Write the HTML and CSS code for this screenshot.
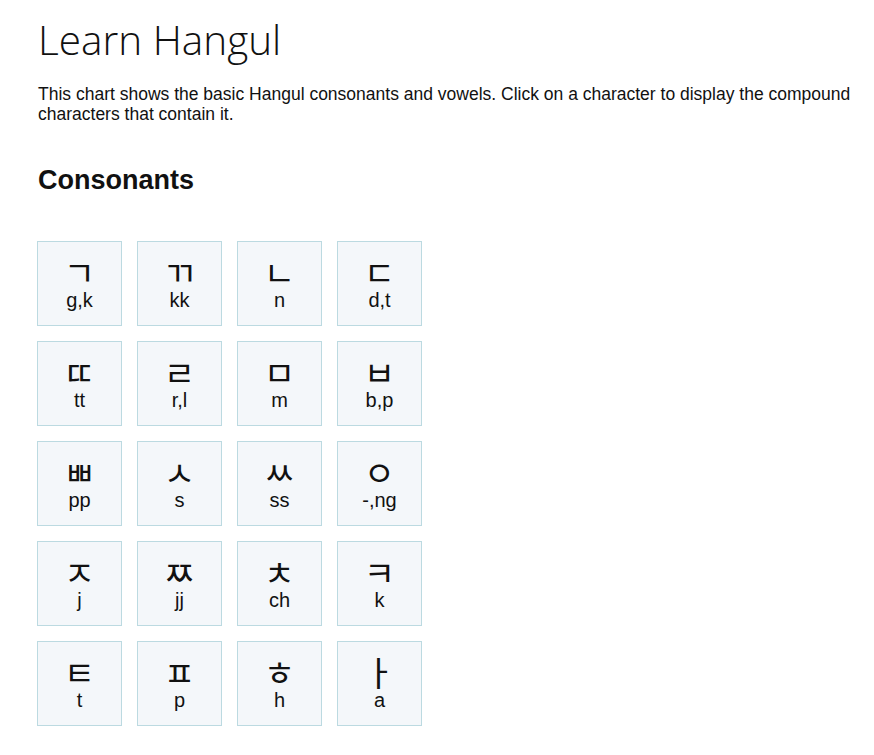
FILE: index.html
```html
<!DOCTYPE html>
<html lang="en">
<head>
<meta charset="utf-8">
<title>Learn Hangul</title>
<link rel="stylesheet" href="styles.css">
</head>
<body>
<main class="page">
  <h1 class="title">Learn Hangul</h1>
  <p class="intro">This chart shows the basic Hangul consonants and vowels. Click on a character to display the compound characters that contain it.</p>
  <h2 class="section">Consonants</h2>
  <div class="grid">
    <div class="card"><span class="ko">ㄱ</span><span class="rom">g,k</span></div>
    <div class="card"><span class="ko">ㄲ</span><span class="rom">kk</span></div>
    <div class="card"><span class="ko">ㄴ</span><span class="rom">n</span></div>
    <div class="card"><span class="ko">ㄷ</span><span class="rom">d,t</span></div>
    <div class="card"><span class="ko">ㄸ</span><span class="rom">tt</span></div>
    <div class="card"><span class="ko">ㄹ</span><span class="rom">r,l</span></div>
    <div class="card"><span class="ko">ㅁ</span><span class="rom">m</span></div>
    <div class="card"><span class="ko">ㅂ</span><span class="rom">b,p</span></div>
    <div class="card"><span class="ko">ㅃ</span><span class="rom">pp</span></div>
    <div class="card"><span class="ko">ㅅ</span><span class="rom">s</span></div>
    <div class="card"><span class="ko">ㅆ</span><span class="rom">ss</span></div>
    <div class="card"><span class="ko">ㅇ</span><span class="rom">-,ng</span></div>
    <div class="card"><span class="ko">ㅈ</span><span class="rom">j</span></div>
    <div class="card"><span class="ko">ㅉ</span><span class="rom">jj</span></div>
    <div class="card"><span class="ko">ㅊ</span><span class="rom">ch</span></div>
    <div class="card"><span class="ko">ㅋ</span><span class="rom">k</span></div>
    <div class="card"><span class="ko">ㅌ</span><span class="rom">t</span></div>
    <div class="card"><span class="ko">ㅍ</span><span class="rom">p</span></div>
    <div class="card"><span class="ko">ㅎ</span><span class="rom">h</span></div>
    <div class="card"><span class="ko">ㅏ</span><span class="rom">a</span></div>
  </div>
</main>
</body>
</html>
```

FILE: styles.css
```css
html, body {
  margin: 0;
  padding: 0;
  background: #ffffff;
  color: #111111;
}
.page {
  padding: 16px 16px 0 37px;
  font-family: "Liberation Sans", Arial, sans-serif;
}
.title {
  margin: 0;
  font-family: "Open Sans", Lato, sans-serif;
  font-weight: 300;
  font-size: 40.5px;
  line-height: 48px;
  color: #111111;
  padding-left: 1px;
}
.intro {
  margin: 20px 0 0 1px;
  font-size: 17.5px;
  line-height: 20px;
}
.section {
  margin: 40px 0 0 1px;
  font-size: 27px;
  line-height: 32px;
  font-weight: bold;
}
.grid {
  margin-top: 45px;
  display: grid;
  grid-template-columns: repeat(4, 85px);
  grid-auto-rows: 85px;
  gap: 15px;
}
.card {
  box-sizing: border-box;
  border: 1px solid #bcdae1;
  background: #f4f7fa;
  display: flex;
  flex-direction: column;
  align-items: center;
  justify-content: flex-start;
  padding-top: 16px;
  cursor: pointer;
}
.ko {
  display: block;
  font-family: "Noto Sans CJK KR", sans-serif;
  font-size: 34px;
  line-height: 28px;
  height: 28px;
}
.rom {
  display: block;
  margin-top: 2px;
  font-size: 20px;
  line-height: 24px;
}
```
